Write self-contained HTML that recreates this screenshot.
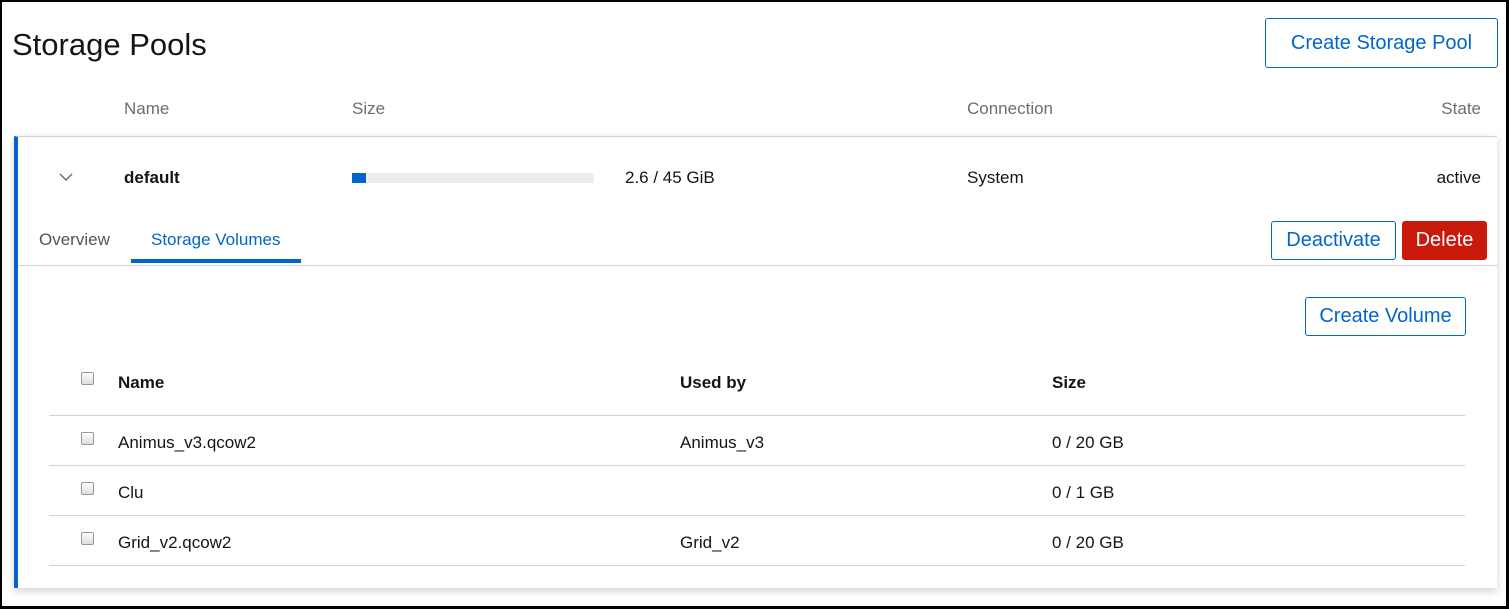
<!DOCTYPE html>
<html><head><meta charset="utf-8"><style>
*{box-sizing:border-box;margin:0;padding:0}
body{width:1509px;height:609px;background:#fff;font-family:"Liberation Sans",sans-serif;color:#151515;position:relative;overflow:hidden}
.frame{position:absolute;left:0;top:0;width:1509px;height:609px;border:2px solid #000;border-right-width:3px;border-bottom-width:3px}
.a{position:absolute;white-space:nowrap}
.btn{position:absolute;border:1px solid #06c;border-radius:3px;color:#06c;background:#fff;display:flex;align-items:center;justify-content:center;font-size:20px}
.hd{color:#6a6e73;font-size:17px}
.cb{position:absolute;width:13px;height:13px;border:1px solid #999;border-radius:2px;background:linear-gradient(#fff,#ddd)}
.line{position:absolute;height:1px;background:#d2d2d2}
.t{font-size:17px}
</style></head><body>
<div class="a" style="left:12px;top:27px;font-size:31px;">Storage Pools</div>
<div class="btn" style="left:1265px;top:18px;width:233px;height:50px;">Create Storage Pool</div>
<div class="a hd" style="left:124px;top:99px;">Name</div>
<div class="a hd" style="left:352px;top:99px;">Size</div>
<div class="a hd" style="left:967px;top:99px;">Connection</div>
<div class="a hd" style="right:28px;top:99px;">State</div>

<div style="position:absolute;left:14px;top:136px;width:1483px;height:452px;border-top:1px solid #d2d2d2;border-left:4px solid #06c;box-shadow:0 3px 8px rgba(0,0,0,.18);background:#fff"></div>
<svg class="a" style="left:59px;top:172px" width="14" height="10" viewBox="0 0 14 10"><path d="M1 2 L7 8 L13 2" fill="none" stroke="#6a6e73" stroke-width="1.5"/></svg>
<div class="a t" style="left:124px;top:168px;font-weight:bold;">default</div>
<div class="a" style="left:352px;top:173px;width:242px;height:10px;background:#ededed"></div>
<div class="a" style="left:352px;top:173px;width:14px;height:10px;background:#06c"></div>
<div class="a t" style="left:625px;top:168px;">2.6 / 45 GiB</div>
<div class="a t" style="left:967px;top:168px;">System</div>
<div class="a t" style="right:28px;top:168px;">active</div>

<div class="a t" style="left:39px;top:230px;color:#555;">Overview</div>
<div class="a t" style="left:151px;top:230px;color:#06c;">Storage Volumes</div>
<div class="a" style="left:131px;top:259px;width:170px;height:4px;background:#06c"></div>
<div class="line" style="left:18px;top:265px;width:1479px"></div>
<div class="btn" style="left:1271px;top:221px;width:125px;height:39px;">Deactivate</div>
<div class="btn" style="left:1402px;top:221px;width:85px;height:39px;background:#c9190b;border-color:#c9190b;color:#fff;">Delete</div>
<div class="btn" style="left:1305px;top:297px;width:161px;height:39px;">Create Volume</div>

<div class="cb" style="left:81px;top:372px"></div>
<div class="a t" style="left:118px;top:373px;font-weight:bold;">Name</div>
<div class="a t" style="left:680px;top:373px;font-weight:bold;">Used by</div>
<div class="a t" style="left:1052px;top:373px;font-weight:bold;">Size</div>
<div class="line" style="left:49px;top:415px;width:1416px"></div>

<div class="cb" style="left:81px;top:432px"></div>
<div class="a t" style="left:118px;top:433px;">Animus_v3.qcow2</div>
<div class="a t" style="left:680px;top:433px;">Animus_v3</div>
<div class="a t" style="left:1052px;top:433px;">0 / 20 GB</div>
<div class="line" style="left:49px;top:465px;width:1416px"></div>

<div class="cb" style="left:81px;top:482px"></div>
<div class="a t" style="left:118px;top:483px;">Clu</div>
<div class="a t" style="left:1052px;top:483px;">0 / 1 GB</div>
<div class="line" style="left:49px;top:515px;width:1416px"></div>

<div class="cb" style="left:81px;top:532px"></div>
<div class="a t" style="left:118px;top:533px;">Grid_v2.qcow2</div>
<div class="a t" style="left:680px;top:533px;">Grid_v2</div>
<div class="a t" style="left:1052px;top:533px;">0 / 20 GB</div>
<div class="line" style="left:49px;top:565px;width:1416px"></div>

<div class="frame"></div>
</body></html>
